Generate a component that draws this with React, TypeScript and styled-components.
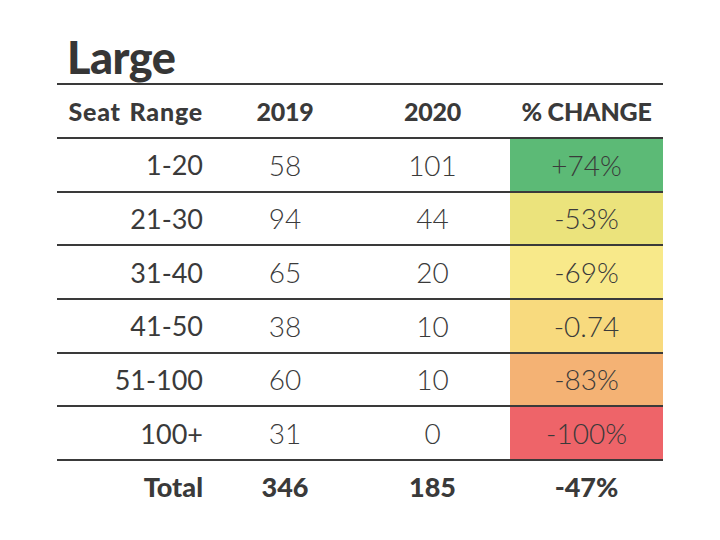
import React from "react";
import styled, { createGlobalStyle } from "styled-components";

const GlobalStyle = createGlobalStyle`
  html, body {
    margin: 0;
    padding: 0;
    background: #ffffff;
  }
  body {
    font-family: "Lato", "Liberation Sans", sans-serif;
    color: #3a3a3a;
  }
`;

const Page = styled.div`
  width: 720px;
  height: 540px;
  box-sizing: border-box;
  padding: 28px 0 0 57px;
`;

const Title = styled.h1`
  margin: 0 0 0 10px;
  height: 55px;
  font-size: 45px;
  font-weight: 900;
  line-height: 58px;
  letter-spacing: -0.5px;
  color: #363636;
`;

const Table = styled.div`
  width: 606px;
  display: grid;
  grid-template-columns: 158px 140px 155px 153px;
  border-top: 2px solid #3a3a3a;
`;

const Row = styled.div<{ $last?: boolean; $height: string }>`
  display: contents;
  & > * {
    height: ${({ $height }) => $height};
    border-bottom: ${({ $last }) => ($last ? "none" : "2px solid #3a3a3a")};
  }
`;

const Cell = styled.div<{ $align?: "right" | "center"; $bg?: string }>`
  box-sizing: content-box;
  display: flex;
  align-items: center;
  justify-content: ${({ $align }) => ($align === "right" ? "flex-end" : "center")};
  padding-right: ${({ $align }) => ($align === "right" ? "12px" : "0")};
  background: ${({ $bg }) => $bg || "transparent"};
  font-size: 28px;
  font-weight: 300;
  color: #3a3a3a;
`;

const RangeCell = styled(Cell)`
  font-size: 27px;
  font-weight: 400;
`;

const HeadCell = styled(Cell)<{ $wide?: boolean }>`
  font-size: 25px;
  font-weight: 900;
  letter-spacing: ${({ $wide }) => ($wide ? "0.8px" : "-0.2px")};
  word-spacing: ${({ $wide }) => ($wide ? "2px" : "0")};
`;

const TotalCell = styled(Cell)`
  font-size: 27px;
  font-weight: 900;
`;

const rows = [
  { range: "1-20", a: "58", b: "101", change: "+74%", color: "#5cba76" },
  { range: "21-30", a: "94", b: "44", change: "-53%", color: "#ebe37c" },
  { range: "31-40", a: "65", b: "20", change: "-69%", color: "#f8e98a" },
  { range: "41-50", a: "38", b: "10", change: "-0.74", color: "#f8da7e" },
  { range: "51-100", a: "60", b: "10", change: "-83%", color: "#f4b274" },
  { range: "100+", a: "31", b: "0", change: "-100%", color: "#ee6469" },
];

export default function App() {
  return (
    <Page>
      <GlobalStyle />
      <Title>Large</Title>
      <Table>
        <Row $height="52px">
          <HeadCell $align="right" $wide>Seat Range</HeadCell>
          <HeadCell>2019</HeadCell>
          <HeadCell>2020</HeadCell>
          <HeadCell>% CHANGE</HeadCell>
        </Row>
        {rows.map((r) => (
          <Row key={r.range} $height="51.67px">
            <RangeCell $align="right">{r.range}</RangeCell>
            <Cell>{r.a}</Cell>
            <Cell>{r.b}</Cell>
            <Cell $bg={r.color}>{r.change}</Cell>
          </Row>
        ))}
        <Row $last $height="52px">
          <TotalCell $align="right">Total</TotalCell>
          <TotalCell>346</TotalCell>
          <TotalCell>185</TotalCell>
          <TotalCell>-47%</TotalCell>
        </Row>
      </Table>
    </Page>
  );
}
